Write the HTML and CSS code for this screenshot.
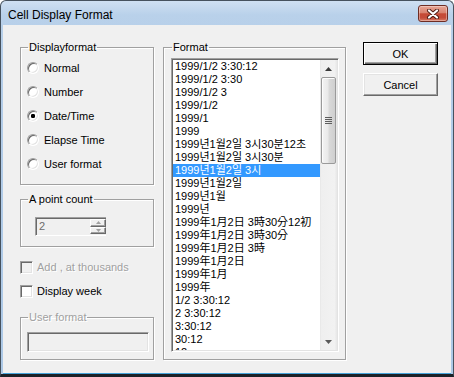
FILE: index.html
```html
<!DOCTYPE html>
<html lang="en">
<head>
<meta charset="utf-8">
<title>Cell Display Format</title>
<link rel="stylesheet" href="styles.css">
</head>
<body>
<div class="window">
  <div class="titlebar">
    <span class="title">Cell Display Format</span>
    <div class="close">
      <svg width="14" height="10" viewBox="0 0 14 10">
        <path d="M3 1.5 L11 8.5 M11 1.5 L3 8.5" stroke="#4a1a12" stroke-width="4" stroke-linecap="round" fill="none"/>
        <path d="M3 1.5 L11 8.5 M11 1.5 L3 8.5" stroke="#ffffff" stroke-width="2.2" stroke-linecap="round" fill="none"/>
      </svg>
    </div>
  </div>
  <div class="client">
    <div class="col-left">
      <fieldset class="group g-display">
        <legend>Displayformat</legend>
        <div class="radio-row"><span class="radio"></span><span>Normal</span></div>
        <div class="radio-row"><span class="radio"></span><span>Number</span></div>
        <div class="radio-row"><span class="radio checked"></span><span>Date/Time</span></div>
        <div class="radio-row"><span class="radio"></span><span>Elapse Time</span></div>
        <div class="radio-row"><span class="radio"></span><span>User format</span></div>
      </fieldset>
      <fieldset class="group g-point">
        <legend>A point count</legend>
        <div class="spin-edit">
          <span class="val">2</span>
          <div class="spin">
            <span class="spin-btn"><svg width="5" height="3" viewBox="0 0 5 3"><path d="M2.5 0 L5 3 L0 3 Z" fill="#a0a0a0"/></svg></span>
            <span class="spin-btn"><svg width="5" height="3" viewBox="0 0 5 3"><path d="M0 0 L5 0 L2.5 3 Z" fill="#a0a0a0"/></svg></span>
          </div>
        </div>
      </fieldset>
      <div class="checks">
        <div class="check-row disabled"><span class="check"></span><span>Add , at thousands</span></div>
        <div class="check-row"><span class="check"></span><span>Display week</span></div>
      </div>
      <fieldset class="group g-user disabled">
        <legend>User format</legend>
        <div class="edit"></div>
      </fieldset>
    </div>

    <fieldset class="group g-format">
      <legend>Format</legend>
      <div class="listbox">
        <div class="items">
          <div class="item">1999/1/2 3:30:12</div>
          <div class="item">1999/1/2 3:30</div>
          <div class="item">1999/1/2 3</div>
          <div class="item">1999/1/2</div>
          <div class="item">1999/1</div>
          <div class="item">1999</div>
          <div class="item">1999년1월2일 3시30분12초</div>
          <div class="item">1999년1월2일 3시30분</div>
          <div class="item sel">1999년1월2일 3시</div>
          <div class="item">1999년1월2일</div>
          <div class="item">1999년1월</div>
          <div class="item">1999년</div>
          <div class="item">1999年1月2日 3時30分12初</div>
          <div class="item">1999年1月2日 3時30分</div>
          <div class="item">1999年1月2日 3時</div>
          <div class="item">1999年1月2日</div>
          <div class="item">1999年1月</div>
          <div class="item">1999年</div>
          <div class="item">1/2 3:30:12</div>
          <div class="item">2 3:30:12</div>
          <div class="item">3:30:12</div>
          <div class="item">30:12</div>
          <div class="item">12</div>
        </div>
        <div class="vscroll">
          <div class="sb-btn"><svg width="7" height="4" viewBox="0 0 7 4"><path d="M3.5 0 L7 4 L0 4 Z" fill="#3a3a3a"/></svg></div>
          <div class="thumb"><span class="grip"></span></div>
          <div class="track"></div>
          <div class="sb-btn"><svg width="7" height="4" viewBox="0 0 7 4"><path d="M0 0 L7 0 L3.5 4 Z" fill="#5a5a5a"/></svg></div>
        </div>
      </div>
    </fieldset>

    <div class="col-buttons">
      <button class="btn default">OK</button>
      <button class="btn">Cancel</button>
    </div>
  </div>
</div>
</body>
</html>
```

FILE: styles.css
```css
* { box-sizing: border-box; }
html, body { margin: 0; padding: 0; }
body {
  width: 454px;
  height: 377px;
  overflow: hidden;
  background: #ffffff;
  font-family: "Liberation Sans", "Noto Sans CJK KR", "Noto Sans CJK JP", sans-serif;
  font-size: 11px;
  color: #000;
}

.window {
  width: 454px;
  height: 377px;
  display: flex;
  flex-direction: column;
  border: 1px solid #46525e;
  border-bottom: 3px solid #1b2127;
  border-radius: 6px 6px 0 0;
  background: linear-gradient(#cfe0f2, #b9d1ea 14px, #b4cde8 60px, #acc8e6);
}

.titlebar {
  height: 24px;
  flex: none;
  display: flex;
  justify-content: space-between;
  align-items: flex-start;
  padding: 0 5px 0 7px;
}
.title {
  font-family: "Liberation Sans", sans-serif;
  font-size: 12px;
  line-height: 12px;
  margin-top: 8px;
  color: #000;
}
.close {
  width: 30px;
  height: 17px;
  margin-top: 4px;
  border: 1px solid #6e2d24;
  border-radius: 3px;
  background: linear-gradient(#e7a595, #d98470 45%, #c64a35 52%, #c44c39 78%, #d87c65);
  box-shadow: inset 0 0 0 1px rgba(255, 255, 255, 0.35);
  display: flex;
  align-items: center;
  justify-content: center;
}

.client {
  flex: 1;
  margin: 0 2px;
  background: #f0f0f0;
  border-bottom: 1px solid #45a3da;
  display: flex;
  align-items: flex-start;
  padding: 16px 0 0 17px;
}

/* group boxes */
.group {
  margin: 0;
  min-width: 0;
  border: 1px solid #a0a0a0;
  box-shadow: 1px 1px 0 #ffffff, inset 1px 1px 0 #ffffff;
  padding: 0 0 0 6px;
}
.group > legend {
  padding: 0 1px;
  margin-left: 1px;
  line-height: 13px;
  font-size: 11px;
}
.group.disabled > legend {
  color: #a0a0a0;
  text-shadow: 1px 1px 0 #fff;
}

.col-left {
  width: 134px;
  flex: none;
  display: flex;
  flex-direction: column;
  gap: 8px;
}

.g-display { height: 144px; padding-top: 2px; }
.radio-row {
  height: 24px;
  display: flex;
  align-items: center;
  gap: 5px;
}
.radio {
  width: 12px;
  height: 12px;
  flex: none;
  border-radius: 50%;
  border: 1px solid;
  border-color: #a0a0a0 #ffffff #ffffff #a0a0a0;
  box-shadow: inset 1px 1px 0 #696969, inset -1px -1px 0 #e3e3e3;
  background: #ffffff;
}
.radio.checked {
  background: radial-gradient(circle at 50% 50%, #000 0, #000 1.9px, #ffffff 2.5px);
}

.g-point { height: 54px; padding-top: 11px; }
.spin-edit {
  width: 71px;
  height: 19px;
  margin-left: 8px;
  display: flex;
  border-top: 1px solid #a0a0a0;
  border-left: 1px solid #a0a0a0;
  border-bottom: 1px solid #ffffff;
  box-shadow: inset 1px 1px 0 #696969;
  background: #f0f0f0;
}
.val {
  flex: 1;
  padding: 2px 0 0 3px;
  line-height: 13px;
  color: #6d6d6d;
}
.spin {
  width: 16px;
  display: flex;
  flex-direction: column;
  padding: 1px 0 1px 0;
}
.spin-btn {
  flex: 1;
  display: flex;
  align-items: center;
  justify-content: center;
  background: #f0f0f0;
  border: 1px solid;
  border-color: #ffffff #696969 #696969 #ffffff;
  box-shadow: inset -1px -1px 0 #a0a0a0;
}

.checks { display: flex; flex-direction: column; }
.check-row {
  height: 24px;
  display: flex;
  align-items: center;
  gap: 4px;
}
.check {
  width: 13px;
  height: 13px;
  flex: none;
  border: 1px solid;
  border-color: #a0a0a0 #ffffff #ffffff #a0a0a0;
  box-shadow: inset 1px 1px 0 #696969, inset -1px -1px 0 #e3e3e3;
  background: #ffffff;
}
.check-row.disabled { color: #a0a0a0; text-shadow: 1px 1px 0 #fff; }
.check-row.disabled .check { background: #f0f0f0; }

.g-user { height: 49px; padding-top: 8px; }
.edit {
  width: 122px;
  height: 20px;
  border: 1px solid;
  border-color: #a0a0a0 #ffffff #ffffff #a0a0a0;
  box-shadow: inset 1px 1px 0 #696969, inset -1px -1px 0 #e3e3e3;
  background: #f0f0f0;
}

/* format list */
.g-format {
  width: 183px;
  height: 319px;
  flex: none;
  margin-left: 9px;
  padding: 4px 6px 0 7px;
}
.listbox {
  height: 294px;
  display: flex;
  border: 1px solid;
  border-color: #a0a0a0 #ffffff #ffffff #a0a0a0;
  box-shadow: inset 1px 1px 0 #696969, inset -1px -1px 0 #e3e3e3;
  padding: 1px;
  background: #ffffff;
  background-clip: content-box;
}
.items {
  flex: 1;
  min-width: 0;
  overflow: hidden;
  background: #ffffff;
}
.item {
  height: 13px;
  line-height: 13px;
  padding-left: 2px;
  white-space: nowrap;
  overflow: hidden;
}
.item.sel { background: #3399ff; color: #ffffff; }

.vscroll {
  width: 17px;
  flex: none;
  display: flex;
  flex-direction: column;
  background: linear-gradient(to right, #e3e3e3 0, #efefef 1px, #f2f2f2 15px, #e9e9e9 16px);
}
.sb-btn {
  height: 17px;
  flex: none;
  display: flex;
  align-items: center;
  justify-content: center;
}
.thumb {
  height: 87px;
  flex: none;
  margin: 0 1px;
  border: 1px solid #9a9a9a;
  border-radius: 2px;
  background: linear-gradient(to right, #f4f4f4, #e9e9e9 45%, #d9d9d9 55%, #cfcfcf);
  box-shadow: inset 1px 1px 0 #fcfcfc;
  display: flex;
  align-items: center;
  justify-content: center;
}
.grip {
  width: 7px;
  height: 7px;
  background: repeating-linear-gradient(#5d5d5d 0 1px, transparent 1px 2px);
}
.track { flex: 1; }

/* buttons */
.col-buttons {
  margin-left: 17px;
  margin-top: 1px;
  display: flex;
  flex-direction: column;
  gap: 8px;
}
.btn {
  width: 75px;
  height: 23px;
  padding: 0;
  margin: 0;
  font-family: "Liberation Sans", sans-serif;
  font-size: 11px;
  color: #000;
  background: #f0f0f0;
  border: 1px solid;
  border-color: #ffffff #696969 #696969 #ffffff;
  box-shadow: inset -1px -1px 0 #a0a0a0, inset 1px 1px 0 #e3e3e3;
  border-radius: 0;
}
.btn.default {
  border-color: #000000;
  box-shadow: inset 1px 1px 0 #ffffff, inset -1px -1px 0 #696969, inset -2px -2px 0 #a0a0a0;
}
```
